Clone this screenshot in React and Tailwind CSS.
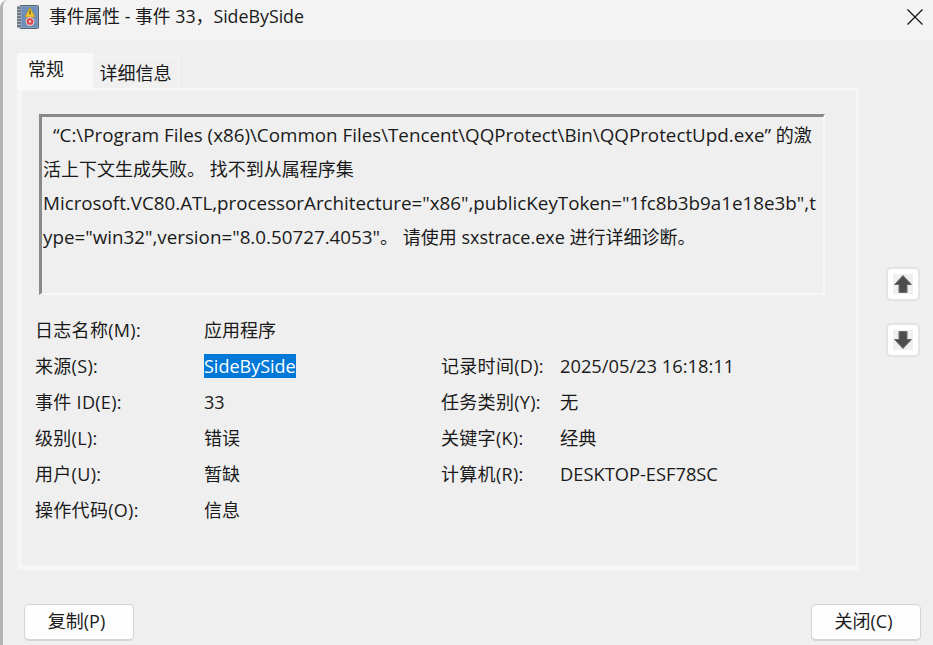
const FONT = "font-['Open_Sans','Noto_Sans_CJK_SC',sans-serif]";

const rows = [
  ["日志名称(M):", "应用程序", "", ""],
  ["来源(S):", "SideBySide", "记录时间(D):", "2025/05/23 16:18:11"],
  ["事件 ID(E):", "33", "任务类别(Y):", "无"],
  ["级别(L):", "错误", "关键字(K):", "经典"],
  ["用户(U):", "暂缺", "计算机(R):", "DESKTOP-ESF78SC"],
  ["操作代码(O):", "信息", "", ""],
];

function BookIcon() {
  return (
    <svg width="22" height="24" viewBox="0 0 22 24" className="shrink-0">
      <rect x="2.500" y="0.500" width="19" height="23" rx="1" fill="#7f9cc2" stroke="#5a6470" />
      <rect x="5" y="2" width="15" height="20" fill="#6f8fb8" />
      <rect x="0" y="1" width="4" height="22" fill="#a8afb8" />
      <path d="M0 3h4M0 6h4M0 9h4M0 12h4M0 15h4M0 18h4M0 21h4" stroke="#3f4650" strokeWidth="1" />
      <path d="M13 2.500l5 9.500h-10z" fill="#f2c935" stroke="#b08a1c" strokeWidth="0.6" />
      <rect x="12.400" y="5.500" width="1.200" height="4" fill="#5b4a10" />
      <circle cx="13" cy="16.500" r="4" fill="#d8484a" stroke="#f0d8d8" strokeWidth="1" />
      <circle cx="13" cy="16.500" r="1.200" fill="#f3c9c9" />
    </svg>
  );
}

function ArrowButton({ d }) {
  return (
    <button className="flex h-[34px] w-[34px] items-center justify-center rounded-[5px] border-2 border-[#e4e4e4] bg-white">
      <span className="flex h-5 w-5 items-center justify-center bg-[#f0f0f0]">
        <svg width="20" height="20" viewBox="0 0 20 20">
          <path d={d} fill="#4d4d4d" stroke="#6e6e6e" strokeWidth="1" strokeLinejoin="round" />
        </svg>
      </span>
    </button>
  );
}

function FooterButton({ children }) {
  return (
    <button className="h-[37px] w-[110px] rounded-[5px] border border-b-2 border-[#d4d4d4] bg-[#fdfdfd] pb-[2px] pr-[5px] text-[18px] text-[#1a1a1a]">
      {children}
    </button>
  );
}

function Latin({ children }) {
  return <span className="text-[18.800px]">{children}</span>;
}

export default function App() {
  return (
    <div className={`${FONT} flex h-[645px] w-[933px] flex-col overflow-hidden rounded-tl-lg border-l-[3px] border-[#b4b4b4] bg-[#efefef] text-[18px] leading-none text-[#1a1a1a]`}>
      <div className="flex h-10 items-center bg-[#f3f3f3] pb-[7px] pl-[14px] pr-[10px]">
        <BookIcon />
        <span className="ml-[10px] text-[17.800px]">事件属性 - 事件 33，SideBySide</span>
        <svg width="16" height="16" viewBox="0 0 16 16" className="ml-auto">
          <path d="M0.500 0.500L15.500 15.500M15.500 0.500L0.500 15.500" stroke="#111" strokeWidth="1.200" />
        </svg>
      </div>

      <div className="flex flex-1 flex-col pl-[14px]">
        <div className="mt-[13px] flex items-end">
          <div className="relative z-10 flex h-[37px] w-[76px] items-center bg-[#f9f9f9] pb-[6px] pl-[11px]">常规</div>
          <div className="flex h-[33px] w-[86px] items-center justify-center border-r border-t border-[#f6f6f6] bg-[#f0f0f0] pb-[3px]">详细信息</div>
        </div>

        <div className="-mt-[2px] flex items-start">
          <div className="h-[482px] w-[842px] border-b-[5px] border-l-[5px] border-r-[3px] border-t-[3px] border-[#f6f6f6] pl-[17px] pt-[23px]">
            <div className="h-[181px] w-[786px] border-b-2 border-l-[3px] border-r-2 border-t-[3px] border-b-[#f8f8f8] border-l-[#8a8a8a] border-r-[#f8f8f8] border-t-[#8a8a8a] pl-[1px] pr-[1px] leading-[34px]">
              <p className="mt-[1px] indent-[10px] wrap-break-word">
                <Latin>“C:\Program Files (x86)\Common Files\Tencent\QQProtect\Bin\QQProtectUpd.exe”</Latin> 的激活上下文生成失败。 找不到从属程序集 <Latin>Microsoft.VC80.ATL,processorArchitecture="x86",publicKeyToken="1fc8b3b9a1e18e3b",type="win32",version="8.0.50727.4053"</Latin>。 请使用 sxstrace.exe 进行详细诊断。
              </p>
            </div>

            <div className="-ml-[4px] mt-[17px] grid grid-cols-[169px_237px_119px_1fr]">
              {rows.map((r) => (
                <div key={r[0]} className="col-span-4 grid h-9 grid-cols-subgrid items-center">
                  <span className="tracking-[0.3px]">{r[0]}</span>
                  <span>
                    {r[1] === "SideBySide" ? <span className="bg-[#0078d7] text-white">{r[1]}</span> : r[1]}
                  </span>
                  <span className="tracking-[0.3px]">{r[2]}</span>
                  <span className="text-[18.300px]">{r[3]}</span>
                </div>
              ))}
            </div>
          </div>

          <div className="ml-[27px] mt-[179px] flex flex-col gap-[22px]">
            <ArrowButton d="M10 1.500L18.500 10.500H14V18.500H6V10.500H1.500Z" />
            <ArrowButton d="M10 18.500L18.500 9.500H14V1.500H6V9.500H1.500Z" />
          </div>
        </div>

        <div className="mt-[34px] flex justify-between pl-[7px] pr-[12px]">
          <FooterButton>复制(P)</FooterButton>
          <FooterButton>关闭(C)</FooterButton>
        </div>
      </div>
    </div>
  );
}
